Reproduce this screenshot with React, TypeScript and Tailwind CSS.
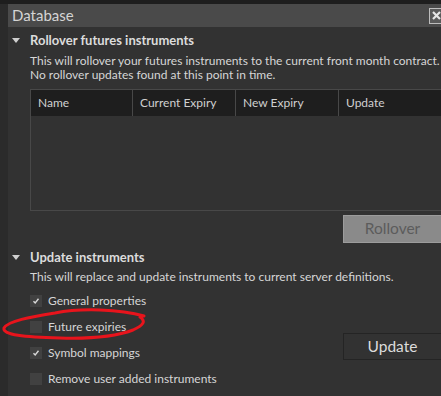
import React from 'react'

const COLUMNS = ['Name', 'Current Expiry', 'New Expiry', 'Update']

const OPTIONS = [
  { label: 'General properties', checked: true },
  { label: 'Future expiries', checked: false },
  { label: 'Symbol mappings', checked: true },
  { label: 'Remove user added instruments', checked: false }
]

function Triangle() {
  return (
    <svg width="8" height="6" viewBox="0 0 8 6" className="shrink-0">
      <path d="M0 0 L8 0 L4 5 Z" fill="#d0d0d0" />
    </svg>
  )
}

function Checkbox({ checked }: { checked: boolean }) {
  return (
    <div className="w-3 h-3 bg-[#414141] flex items-center justify-center shrink-0">
      {checked && (
        <svg width="8" height="8" viewBox="0 0 8 8">
          <path d="M1.5 4.2 L3.2 6 L6.5 1.8" stroke="#d8d8d8" strokeWidth="1.4" fill="none" />
        </svg>
      )}
    </div>
  )
}

export default function App() {
  return (
    <div
      className="w-[441px] h-[396px] bg-[#1e1e1e] overflow-hidden flex flex-col relative"
      style={{ fontFamily: 'Lato, "Noto Sans", sans-serif' }}
    >
      <div className="h-1 shrink-0" />
      <div className="flex flex-1 min-h-0">
        {/* left frame edge */}
        <div className="w-2 bg-[#2b2b2b] shrink-0" />

        <div className="flex-1 min-w-0 overflow-hidden flex flex-col bg-[#323232]">
          {/* TITLE BAR */}
          <div className="h-[23px] shrink-0 bg-[#4a4a4a] flex items-center justify-between pl-1 overflow-hidden">
            <span className="text-[15px] text-[#d4d4d4] leading-none">Database</span>
            <div className="w-[14px] h-[16px] border border-[#bdbdbd] bg-[#5a5a5a] flex items-center justify-center -mr-[2px]">
              <svg width="9" height="9" viewBox="0 0 9 9">
                <path d="M1 1 L8 8 M8 1 L1 8" stroke="#e6e6e6" strokeWidth="2.2" />
              </svg>
            </div>
          </div>

          {/* ROLLOVER */}
          <div className="flex items-center gap-[10px] pl-1 pt-[3px] h-[24px]">
            <Triangle />
            <span className="text-[13px] font-bold text-[#dcdcdc]">Rollover futures instruments</span>
          </div>
          <div className="pl-[22px] text-[12px] leading-[14px] text-[#d6d6d6] whitespace-nowrap pt-[3px]">
            <div>This will rollover your futures instruments to the current front month contract.</div>
            <div>No rollover updates found at this point in time.</div>
          </div>

          <div className="ml-[22px] mt-[7px] h-[122px] border border-[#484848] border-r-0 flex flex-col">
            <div className="h-[26px] bg-[#1e1e1e] grid grid-cols-[102px_103px_103px_1fr]">
              {COLUMNS.map((c, i) => (
                <div
                  key={c}
                  className={`flex items-center pl-[7px] text-[12px] text-[#d0d0d0] ${i < 3 ? 'border-r border-[#484848]' : ''}`}
                >
                  {c}
                </div>
              ))}
            </div>
            <div className="flex-1" />
          </div>

          <div className="flex justify-end mt-[4px]">
            <div className="w-[98px] h-[28px] bg-[#8a8a8a] border border-[#9c9c9c] border-r-0 flex items-center justify-center text-[15.5px] text-[#5c5c5c]">
              Rollover
            </div>
          </div>

          {/* UPDATE */}
          <div className="flex items-center gap-[10px] pl-1 h-[22px] mt-[4px]">
            <Triangle />
            <span className="text-[13px] font-bold text-[#dcdcdc]">Update instruments</span>
          </div>
          <div className="pl-[22px] text-[12px] leading-[14px] text-[#d6d6d6] whitespace-nowrap mt-[1px]">
            This will replace and update instruments to current server definitions.
          </div>

          <div className="flex mt-[4px]">
            <div className="flex flex-col pl-[22px] flex-1">
              {OPTIONS.map(o => (
                <div key={o.label} className="flex items-center gap-[6px] h-[26px]">
                  <Checkbox checked={o.checked} />
                  <span className="text-[12px] text-[#d6d6d6]">{o.label}</span>
                </div>
              ))}
            </div>
            <div className="flex items-start pt-[45px]">
              <div className="w-[98px] h-[27px] border border-[#242424] border-r-0 flex items-center justify-center text-[15.5px] text-[#dcdcdc]">
                Update
              </div>
            </div>
          </div>
        </div>
      </div>

      {/* hand-drawn red annotation */}
      <svg className="absolute left-0 top-[305px] pointer-events-none" width="150" height="40" viewBox="0 0 150 40">
        <path
          d="M144 11 C120 4 80 3 55 8 C30 12 8 16 4 23 C2 30 25 32 60 33 C95 34 120 30 133 25 C144 20 146 16 140 12"
          stroke="#e8141c"
          strokeWidth="3"
          fill="none"
          strokeLinecap="round"
        />
      </svg>
    </div>
  )
}
